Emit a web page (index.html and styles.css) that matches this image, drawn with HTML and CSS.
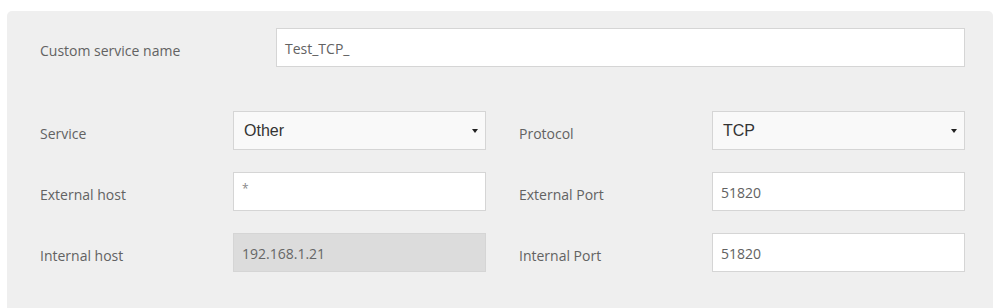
FILE: index.html
```html
<!DOCTYPE html>
<html>
<head>
<meta charset="utf-8">
<link rel="stylesheet" href="styles.css">
</head>
<body>
<div class="panel">
  <div class="row-name">
    <div class="label">Custom service name</div>
    <div class="field text">Test_TCP_</div>
  </div>
  <div class="grid">
    <div class="label">Service</div>
    <div class="field select"><span>Other</span><span class="caret"></span></div>
    <div></div>
    <div class="label">Protocol</div>
    <div class="field select"><span>TCP</span><span class="caret"></span></div>

    <div class="label">External host</div>
    <div class="field text small">*</div>
    <div></div>
    <div class="label">External Port</div>
    <div class="field text">51820</div>

    <div class="label">Internal host</div>
    <div class="field text disabled">192.168.1.21</div>
    <div></div>
    <div class="label">Internal Port</div>
    <div class="field text">51820</div>
  </div>
</div>
</body>
</html>
```
FILE: styles.css
```css
html, body { margin: 0; padding: 0; background: #fff; }
body { padding: 11px 6px 0 7px; height: 308px; box-sizing: border-box; overflow: hidden; }
.panel {
  background: #efefef;
  border-radius: 5px 5px 0 0;
  padding: 17px 28px 0 33px;
  height: 297px;
  box-sizing: border-box;
  font-family: "Open Sans", sans-serif;
}
.label {
  font-size: 14px;
  color: #626262;
  letter-spacing: 0;
  display: flex;
  align-items: center;
  padding-top: 6px;
}
.row-name {
  display: grid;
  grid-template-columns: 236px 1fr;
  height: 39px;
}
.grid {
  margin-top: 44px;
  display: grid;
  grid-template-columns: 193px 253px 33px 193px 1fr;
  grid-auto-rows: 39px;
  row-gap: 22px;
}
.field {
  box-sizing: border-box;
  border: 1px solid #d5d5d5;
  background: #fff;
  display: flex;
  align-items: center;
  padding: 2px 8px 0;
  font-size: 14px;
  color: #626262;
  letter-spacing: 0;
}
.field.small { font-size: 12px; color: #888; padding: 0 8px 6px; }
.field.select {
  background: #f9f9f9;
  justify-content: space-between;
  font-family: "Liberation Sans", Arial, sans-serif;
  font-size: 16px;
  color: #333;
  padding: 0 7px 0 10px;
}
.caret {
  width: 0; height: 0;
  border-left: 3px solid transparent;
  border-right: 3px solid transparent;
  border-top: 4px solid #222;
  margin-top: 1px;
}
.field.disabled { background: #dcdcdc; color: #666; }
```
